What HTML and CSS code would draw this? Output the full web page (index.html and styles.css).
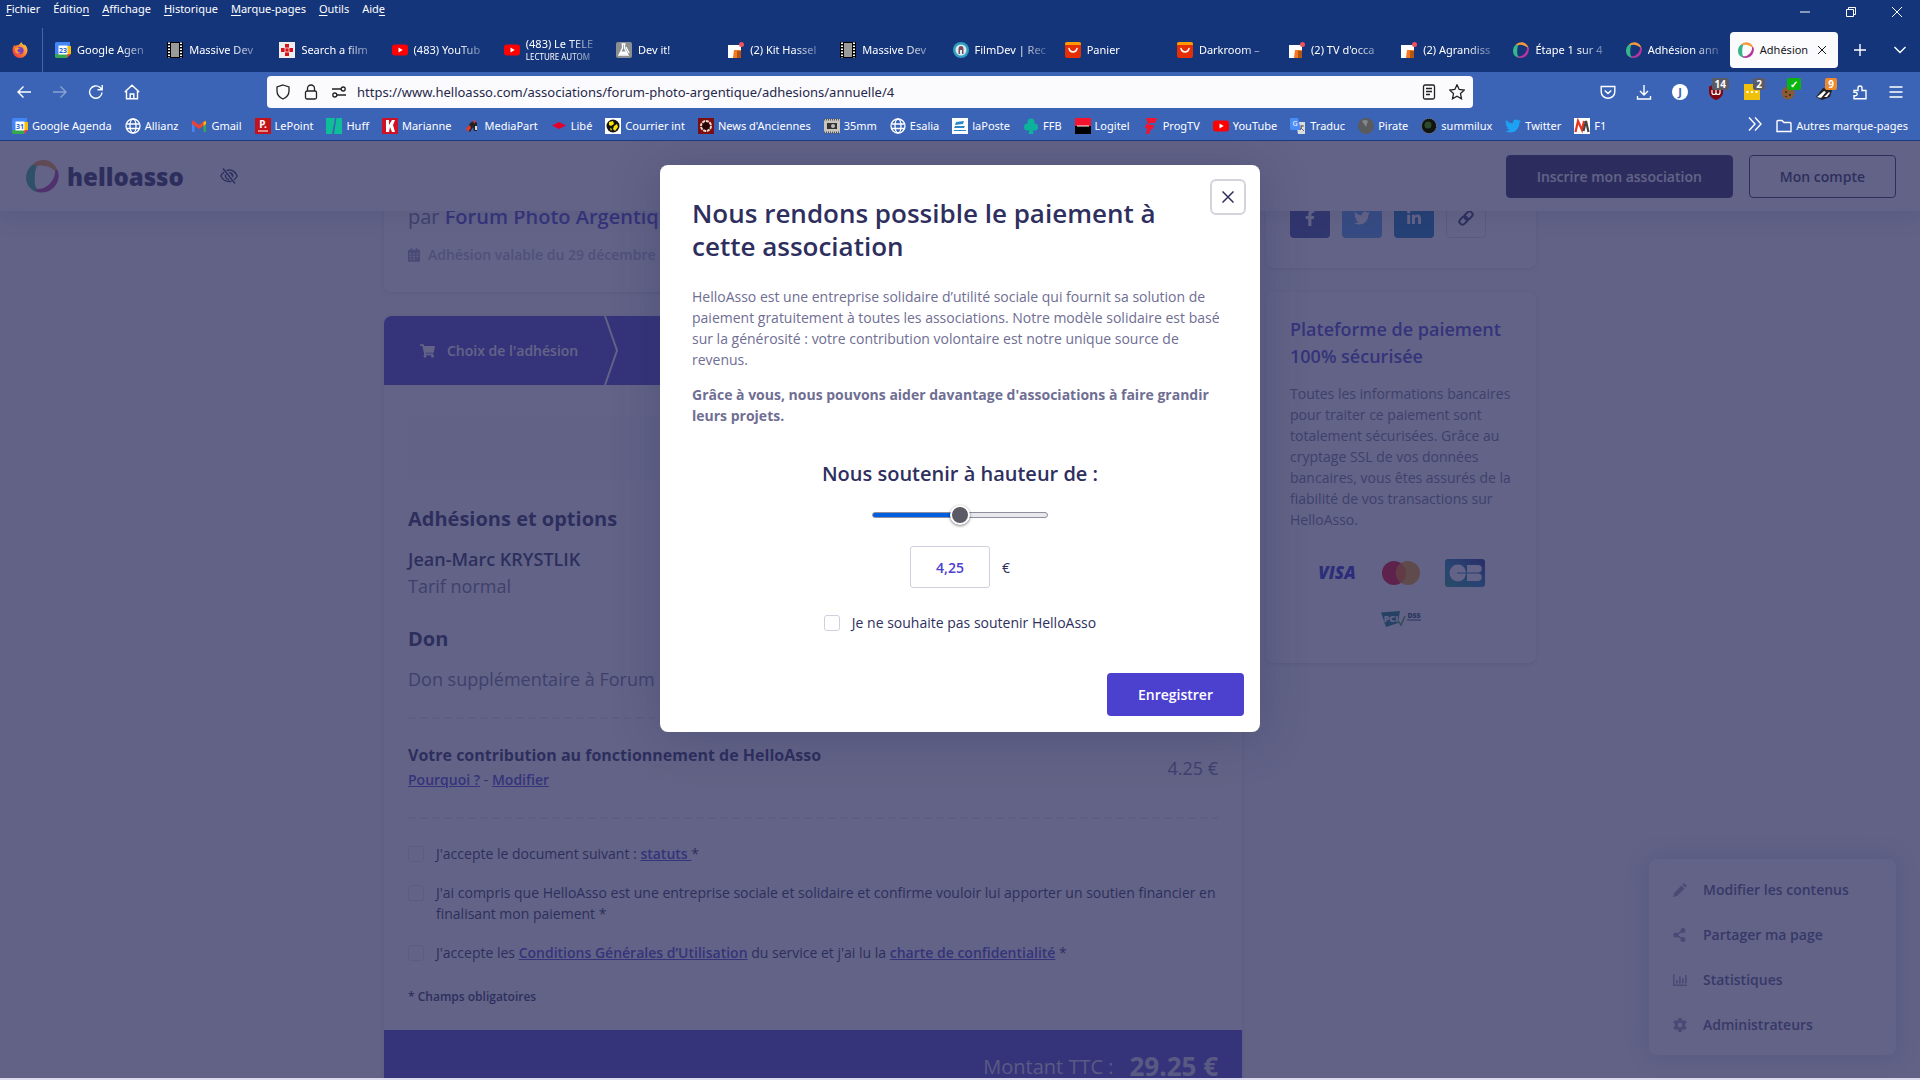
FILE: index.html
```html
<!DOCTYPE html>
<html lang="fr">
<head>
	<meta charset="UTF-8">
	<title>Adhésion annuelle</title>
	<link rel="stylesheet" href="styles.css">
</head>
<body>

<svg class="sprite" aria-hidden="true">
	<defs>
		<linearGradient id="g-fox" x1="1" y1="0" x2="0" y2="1"><stop offset="0" stop-color="#ffe14a"/><stop offset=".5" stop-color="#ff7a2c"/><stop offset="1" stop-color="#e5264f"/></linearGradient>
		<linearGradient id="g-cb" x1="0" y1="1" x2="1" y2="0"><stop offset="0" stop-color="#19a07a"/><stop offset=".5" stop-color="#1a7cb0"/><stop offset="1" stop-color="#202c86"/></linearGradient>
	</defs>
	<symbol id="fox" viewBox="0 0 16 16"><path fill="url(#g-fox)" d="M8 16a7.500 7.500 0 0 1-7.500-7.600c0-2 .6-4 2-5.600l.3 1.500C4 3 5 3.200 6 3.200 7.600 3 8 1 9.500 0c0 1.500 1.500 2 2.600 3.300l.6-.8C14.500 4 15.500 6 15.500 8.500A7.500 7.500 0 0 1 8 16z"/><circle cx="8" cy="8.600" r="3.600" fill="#7b3fc4"/><path fill="#ff9a2e" d="M3 6c2-.8 3.500 0 5 .3-1 1.200-2.600 1-2.600 2.200S7 11 9 10.200c-1 2-5 2-6-1z"/></symbol>
	<symbol id="agenda" viewBox="0 0 16 16"><path fill="#4285f4" d="M1 0h14v12H0V1z"/><path fill="#fbbc04" d="M12 4h4v8h-4z"/><path fill="#34a853" d="M0 12h12v4H1l-1-1z"/><path fill="#ea4335" d="M12 12h4l-4 4z"/><path fill="#fff" d="M3.500 3.500h9v9h-9z"/></symbol>
	<symbol id="film" viewBox="0 0 16 16"><path fill="#000" d="M0 0h16v16H0z"/><path fill="#9a9a9a" d="M4 1h8v14H4z"/><path stroke="#fff" stroke-width="2" stroke-dasharray="1.500 1.500" d="M2 .5V16M14 .5V16"/></symbol>
	<symbol id="cross" viewBox="0 0 16 16"><path fill="#eee" d="M0 0h16v16H0z"/><path fill="#d8121b" d="M6 2h4v4h4v4h-4v4H6v-4H2V6h4z"/><path stroke="#fff" stroke-width=".7" d="M6 6h4v4H6z" fill="none"/></symbol>
	<symbol id="youtube" viewBox="0 0 16 16"><rect y="2.500" width="16" height="11" rx="3" fill="#f00"/><path fill="#fff" d="M6.500 5.600 10.700 8l-4.200 2.400z"/></symbol>
	<symbol id="flask" viewBox="0 0 16 16"><rect width="16" height="16" rx="2" fill="#8b8f92"/><path fill="none" stroke="#fff" stroke-width="1.300" d="M5.500 2h4M6.500 2v4L3 13h9L8.500 6V2M10 5l3 6"/><path fill="#fff" d="M5 9.500h5l1.500 3h-8z"/></symbol>
	<symbol id="forum" viewBox="0 0 16 16"><path fill="#fff" d="M0 3h13v13H0z"/><path fill="#f47a1f" d="M6 8h7l-4 8H5z"/><path fill="#b85410" d="M9 9h4v7H9z"/><circle cx="13.500" cy="2.500" r="2.500" fill="#f0525a"/></symbol>
	<symbol id="filmdev" viewBox="0 0 16 16"><circle cx="8" cy="8" r="8" fill="#2f9ec0"/><circle cx="8" cy="8" r="5.500" fill="#d8eef2"/><path fill="#7a4a5a" d="M5.500 12V7a2.500 3 0 0 1 5 0v5H9V8H7v4z"/></symbol>
	<symbol id="ali" viewBox="0 0 16 16"><rect width="16" height="16" rx="2" fill="#e62e04"/><path fill="#ff9a00" d="M2 0h12a2 2 0 0 1 2 2v1H0V2a2 2 0 0 1 2-2z"/><path fill="none" stroke="#fff" stroke-width="1.500" stroke-linecap="round" d="M4 6.500c1 4.500 7 4.500 8 0"/></symbol>
	<symbol id="ring" viewBox="0 0 34 34"><path fill="#f49a3c" d="M7 5C14-2 26-1 31 8c2 4 2.500 7 2 10-1-5-4-8-9-10S13 5 9 8c-2 2-3 3-3.500 5C4.500 10 5 7 7 5z"/><path fill="#35b58a" d="M6 6c-8 7-8 19 0 25 2 2 6 3 9 3-5-3-6-7-6-12S9 12 11 7C10 6 8 5 6 6z"/><path fill="#b8349c" d="M33 12c3 11-5 22-17 22-3 0-5-1-7-4 5 1 9 0 13-3s8-8 8-15c0-2 2-2 3 0z"/></symbol>
	<symbol id="globe" viewBox="0 0 16 16"><g fill="none" stroke="#fff" stroke-width="1.300"><circle cx="8" cy="8" r="7"/><ellipse cx="8" cy="8" rx="3" ry="7"/><path d="M1.500 6h13M1.500 10.500h13"/></g></symbol>
	<symbol id="gmail" viewBox="0 0 16 16"><path fill="#4285f4" d="M1 3h2.500v11H1z"/><path fill="#34a853" d="M12.500 6H15v8h-2.500z"/><path fill="#ea4335" d="M1 3l1-.6L8 7l6-4.600 1 .6v3L8 11 1 6z"/><path fill="#fbbc04" d="M12.500 4 15 3v3l-2.500 2z"/></symbol>
	<symbol id="bird" viewBox="0 0 512 512"><path d="M459.370 151.716c.325 4.548.325 9.097.325 13.645 0 138.720-105.583 298.558-298.558 298.558-59.452 0-114.680-17.219-161.137-47.106 8.447.974 16.568 1.299 25.340 1.299 49.055 0 94.213-16.568 130.274-44.832-46.132-.975-84.792-31.188-98.112-72.772 6.498.974 12.995 1.624 19.818 1.624 9.421 0 18.843-1.300 27.614-3.573-48.081-9.747-84.143-51.980-84.143-102.985v-1.299c13.969 7.797 30.214 12.670 47.431 13.319-28.264-18.843-46.781-51.005-46.781-87.391 0-19.492 5.197-37.360 14.294-52.954 51.655 63.675 129.300 105.258 216.365 109.807-1.624-7.797-2.599-15.918-2.599-24.040 0-57.828 46.782-104.934 104.934-104.934 30.213 0 57.502 12.670 76.670 33.137 23.715-4.548 46.456-13.320 66.599-25.340-7.798 24.366-24.366 44.833-46.132 57.827 21.117-2.273 41.584-8.122 60.426-16.243-14.292 20.791-32.161 39.308-52.628 54.253z"/></symbol>
</svg>

<header class="browser">
	<div class="menubar">
		<nav class="menus">
			<button><u>F</u>ichier</button>
			<button>Éditio<u>n</u></button>
			<button><u>A</u>ffichage</button>
			<button><u>H</u>istorique</button>
			<button><u>M</u>arque-pages</button>
			<button><u>O</u>utils</button>
			<button>Aid<u>e</u></button>
		</nav>
		<div class="window-buttons">
			<button aria-label="Réduire"><svg viewBox="0 0 12 12"><path d="M1 6h10"/></svg></button>
			<button aria-label="Restaurer"><svg viewBox="0 0 12 12"><path d="M1.500 3.500h7v7h-7zM3.500 3.500v-2h7v7h-2"/></svg></button>
			<button aria-label="Fermer"><svg viewBox="0 0 12 12"><path d="M1 1l10 10M11 1 1 11"/></svg></button>
		</div>
	</div>

	<div class="tabbar">
		<button class="pinned" aria-label="Firefox"><svg><use href="#fox"/></svg></button>
		<div class="tabs">
			<button class="tab"><svg viewBox="0 0 16 16"><use href="#agenda"/><text x="8" y="11" class="day">23</text></svg><span>Google Agen</span></button>
			<button class="tab"><svg><use href="#film"/></svg><span>Massive Dev</span></button>
			<button class="tab"><svg><use href="#cross"/></svg><span>Search a film</span></button>
			<button class="tab"><svg><use href="#youtube"/></svg><span>(483) YouTub</span></button>
			<button class="tab"><svg><use href="#youtube"/></svg><span>(483) Le TELE<small>LECTURE AUTOM</small></span></button>
			<button class="tab"><svg><use href="#flask"/></svg><span>Dev it!</span></button>
			<button class="tab"><svg><use href="#forum"/></svg><span>(2) Kit Hassel</span></button>
			<button class="tab"><svg><use href="#film"/></svg><span>Massive Dev</span></button>
			<button class="tab"><svg><use href="#filmdev"/></svg><span>FilmDev | Rec</span></button>
			<button class="tab"><svg><use href="#ali"/></svg><span>Panier</span></button>
			<button class="tab"><svg><use href="#ali"/></svg><span>Darkroom –</span></button>
			<button class="tab"><svg><use href="#forum"/></svg><span>(2) TV d'occa</span></button>
			<button class="tab"><svg><use href="#forum"/></svg><span>(2) Agrandiss</span></button>
			<button class="tab"><svg><use href="#ring"/></svg><span>Étape 1 sur 4</span></button>
			<button class="tab"><svg><use href="#ring"/></svg><span>Adhésion ann</span></button>
			<button class="tab active"><svg><use href="#ring"/></svg><span>Adhésion</span><svg class="close" viewBox="0 0 12 12"><path d="M2 2l8 8M10 2l-8 8"/></svg></button>
		</div>
		<button class="tab-tool" aria-label="Nouvel onglet"><svg viewBox="0 0 16 16"><path d="M8 2v12M2 8h12"/></svg></button>
		<button class="tab-tool" aria-label="Tous les onglets"><svg viewBox="0 0 16 16"><path d="M2.500 5 8 10.500 13.500 5"/></svg></button>
	</div>

	<div class="toolbar">
		<div class="tools nav-tools">
			<button aria-label="Précédent"><svg viewBox="0 0 16 16"><path d="M15 8H2M7.500 2.500 2 8l5.500 5.500"/></svg></button>
			<button aria-label="Suivant" disabled><svg viewBox="0 0 16 16"><path d="M1 8h13M8.500 2.500 14 8l-5.500 5.500"/></svg></button>
			<button aria-label="Actualiser"><svg viewBox="0 0 16 16"><path d="M14 8.500A6.200 6.200 0 1 1 12 3.500l2 2M14.200 1v4.700H9.500"/></svg></button>
			<button aria-label="Accueil"><svg viewBox="0 0 16 16"><path d="M.8 8 8 1.200 15.200 8M2.500 6.500v8.300h11V6.500M6.200 14.500V10h3.600v4.500"/></svg></button>
		</div>
		<div class="urlbar">
			<svg viewBox="0 0 16 16"><path d="M8 1 14 3v4c0 4-2.500 6.500-6 8-3.500-1.500-6-4-6-8V3z"/></svg>
			<svg viewBox="0 0 16 16"><rect x="2.500" y="7" width="11" height="8" rx="1.500"/><path d="M4.500 7V4.500a3.500 3.500 0 0 1 7 0V7"/></svg>
			<svg viewBox="0 0 16 16"><path d="M1 5h9M6 11h9"/><circle cx="12.200" cy="5" r="2"/><circle cx="3.800" cy="11" r="2"/></svg>
			<input type="text" aria-label="Adresse" value="https://www.helloasso.com/associations/forum-photo-argentique/adhesions/annuelle/4">
			<svg viewBox="0 0 16 16"><rect x="2.500" y="1" width="11" height="14" rx="1.500"/><path d="M5 4.500h6M5 7.500h6M5 10.500h4"/></svg>
			<svg viewBox="0 0 16 16"><path d="M8 .8l2.200 4.700 5 .6-3.700 3.500 1 5.200L8 12.200l-4.500 2.600 1-5.200L.8 6.100l5-.6z"/></svg>
		</div>
		<div class="tools">
			<button aria-label="Pocket"><svg viewBox="0 0 16 16"><path d="M1.200 2.500h13.600V8a6.800 6.200 0 0 1-13.600 0zM4.800 6.500 8 9.500l3.200-3"/></svg></button>
			<button aria-label="Téléchargements"><svg viewBox="0 0 16 16"><path d="M8 1v10M4 7l4 4 4-4M1.500 12v3h13v-3"/></svg></button>
			<button aria-label="Compte"><svg viewBox="0 0 16 16" class="plain"><circle cx="8" cy="8" r="8" fill="#fff"/><text x="8" y="12" class="letter">J</text></svg></button>
			<button aria-label="uBlock"><svg viewBox="0 0 16 16" class="plain"><path fill="#800610" d="M8 0l7 2.500V8c0 4-3 6.500-7 8-4-1.500-7-4-7-8V2.500z"/><path fill="none" stroke="#fff" stroke-width="1.200" d="M4 6v2.500a2 2 0 0 0 4 0V6v2.500a2 2 0 0 0 4 0V6"/></svg><b class="badge">14</b></button>
			<button aria-label="Notes"><svg viewBox="0 0 16 16" class="plain"><path fill="#efc10c" d="M0 0h16v16H0z"/><path fill="#fff" d="M2.500 7h2v2h-2zM7 7h2v2H7zM11.500 7h2v2h-2z"/></svg><b class="badge">2</b></button>
			<button aria-label="Cookies"><svg viewBox="0 0 16 16" class="plain"><circle cx="8" cy="9" r="6.500" fill="#8a5a34"/><path fill="#4f2f18" d="M5 7h2v2H5zM9 10h2v2H9zM5 12h2v1H5z"/></svg><b class="badge green">✓</b></button>
			<button aria-label="Privacy Badger"><svg viewBox="0 0 16 16" class="plain"><path fill="#222" d="M0 13 7 4l9 2-2 7-8 3z"/><path fill="#fff" d="M1 13l7-6 2 1-5 6zM8 13l5-5 1 1-3 4z"/></svg><b class="badge orange">9</b></button>
			<button aria-label="Extensions"><svg viewBox="0 0 16 16"><path d="M2 6.500h4V4a2 2 0 0 1 4 0v2.500h4v8.300H2v-3h1.500a1.700 1.700 0 0 0 0-3.400H2z"/></svg></button>
			<button aria-label="Menu"><svg viewBox="0 0 16 16"><path d="M1.500 3h13M1.500 8h13M1.500 13h13"/></svg></button>
		</div>
	</div>

	<nav class="bookmarks">
		<a href="#"><svg viewBox="0 0 16 16"><use href="#agenda"/><text x="8" y="11" class="day">31</text></svg>Google Agenda</a>
		<a href="#"><svg><use href="#globe"/></svg>Allianz</a>
		<a href="#"><svg><use href="#gmail"/></svg>Gmail</a>
		<a href="#"><svg viewBox="0 0 16 16"><path fill="#c4121a" d="M0 0h16v16H0z"/><text x="8" y="10" class="mark">P.</text><path fill="#fff" d="M3 12.500h10v1H3z"/></svg>LePoint</a>
		<a href="#"><svg viewBox="0 0 16 16"><path fill="#0dbe98" d="M0 0h9L6 16H0zM10.500 0H16v16H8z"/></svg>Huff</a>
		<a href="#"><svg viewBox="0 0 16 16"><path fill="#cf1126" d="M0 0h16v16H0z"/><path fill="#fff" d="M4 2h3v5l3-5h3l-2 5 2 7h-3L8 9l-1 5H4z"/></svg>Marianne</a>
		<a href="#"><svg viewBox="0 0 16 16"><path fill="#222" d="M6 5l4-2 3 2v8h-3l-1-4-3 5-3-2z"/><path fill="#e2382c" d="M2 10l4-3 1 3-3 4zM9 2l3 1-2 3z"/><path fill="#ddd" d="M11 8h2v4h-2z"/></svg>MediaPart</a>
		<a href="#"><svg viewBox="0 0 16 16"><path fill="#e4002b" d="M1 7.500 8 4l7 3.500L8 11z"/></svg>Libé</a>
		<a href="#"><svg viewBox="0 0 16 16"><path fill="#fff" d="M0 0h16v16H0z"/><circle cx="8" cy="8" r="6.500" fill="#111"/><path fill="#ffe300" d="M4 4l4-1 1 3-3 2-2-1zM9 8l3-2 1 3-3 4-2-2zM5 10l2 1-1 2z"/></svg>Courrier int</a>
		<a href="#"><svg viewBox="0 0 16 16"><path fill="#7a0e12" d="M0 0h16v16H0z"/><circle cx="8" cy="8" r="5" fill="#2a0506" stroke="#f0d9c8" stroke-width="2" stroke-dasharray="3 .8"/></svg>News d'Anciennes</a>
		<a href="#"><svg viewBox="0 0 16 16"><path fill="#c9c5bd" d="M0 1h16v14H0z"/><path stroke="#555" stroke-width="2" stroke-dasharray="1 1" d="M0 1.500h16M0 14.500h16"/><path fill="#333" d="M3 5h10v6H3z"/><circle cx="9" cy="8" r="2" fill="#bbb"/></svg>35mm</a>
		<a href="#"><svg><use href="#globe"/></svg>Esalia</a>
		<a href="#"><svg viewBox="0 0 16 16"><path fill="#fff" d="M0 0h16v16H0z"/><path fill="#2b88c8" d="M4 4l8-1-1 3-8 1zM3 8h10l-1 2H2zM2 12h12v1H2z"/></svg>laPoste</a>
		<a href="#"><svg viewBox="0 0 16 16"><g fill="#0cb39a"><circle cx="8" cy="4" r="3.500"/><circle cx="4.500" cy="9" r="3.500"/><circle cx="11.500" cy="9" r="3.500"/><path d="M7 8h2l1.500 8h-5z"/></g></svg>FFB</a>
		<a href="#"><svg viewBox="0 0 16 16"><path fill="#f5142d" d="M0 0h16v8H0z"/><path fill="#000" d="M0 8h16v8H0z"/><path fill="#fff" d="M2 7.500h12v1H2z"/></svg>Logitel</a>
		<a href="#"><svg viewBox="0 0 16 16"><path fill="#f0142c" d="M3 0h11l-2 5H7l-1 2h5l-1 4H8l-2 5H3l1-6H2l1-4h2z"/></svg>ProgTV</a>
		<a href="#"><svg><use href="#youtube"/></svg>YouTube</a>
		<a href="#"><svg viewBox="0 0 16 16"><path fill="#dcdcdc" d="M6 4h9v12H8z"/><path fill="#4b8bf5" d="M0 0h8l3 12H1L0 11z"/><text x="5" y="8" class="tiny">G</text><path stroke="#666" d="M10 8h4M12 7v1l-2 4M11 10l3 3"/></svg>Traduc</a>
		<a href="#"><svg viewBox="0 0 16 16"><circle cx="8" cy="8" r="8" fill="#5a5b5e"/><path fill="#85868a" d="M4 3a5 5 0 0 1 6 0l-2 6z"/></svg>Pirate</a>
		<a href="#"><svg viewBox="0 0 16 16"><circle cx="8" cy="8" r="7.500" fill="#101510" stroke="#888" stroke-dasharray="1 1"/><circle cx="7" cy="7" r="3.500" fill="#2e4a2c"/></svg>summilux</a>
		<a href="#"><svg class="bird"><use href="#bird"/></svg>Twitter</a>
		<a href="#"><svg viewBox="0 0 16 16"><path fill="#fff" d="M0 0h16v16H0z"/><path fill="none" stroke="#e8321e" stroke-width="2.200" d="M1.500 14 4 3l4 9 2-9"/><path fill="none" stroke="#444" stroke-width="2.200" d="M9.500 13 12 3l2.500 11"/></svg>F1</a>
		<button class="more" aria-label="Autres"><svg viewBox="0 0 16 16"><path d="M2 1.500 8 8l-6 6.500M8 1.500 14 8l-6 6.500"/></svg></button>
		<a href="#"><svg viewBox="0 0 16 16" class="line"><path d="M1 13.500V3.500a1 1 0 0 1 1-1h4l2 2h6a1 1 0 0 1 1 1v8z"/></svg>Autres marque-pages</a>
	</nav>
</header>

<div class="viewport">

	<header class="site-header">
		<a class="logo" href="#"><svg><use href="#ring"/></svg>helloasso</a>
		<button class="contrast" aria-label="Contraste"><svg viewBox="0 0 18 16"><path d="M6.500 2.600C11 1 15 3.500 17.200 8c-.8 1.600-1.800 2.800-3 3.700M11.500 13.300C6.500 14.300 3 12 .8 8c.8-1.500 1.900-2.900 3.300-3.900M5.600 6.500c-.6 2.600.9 4.800 3.500 5M9 4.600c2.200 0 3.600 1.600 3.600 3.600M3 .5l12 15"/><path class="iris" d="M10 4.500c3 .5 4 3 3 5.500z"/></svg></button>
		<button class="btn dark">Inscrire mon association</button>
		<button class="btn outline">Mon compte</button>
	</header>

	<div class="page">
		<main>
			<section class="card intro">
				<p class="by">par <a href="#">Forum Photo Argentique</a></p>
				<p class="date"><svg viewBox="0 0 14 16"><path d="M3 0h2v2h4V0h2v2h2a1 1 0 0 1 1 1v12a1 1 0 0 1-1 1H1a1 1 0 0 1-1-1V3a1 1 0 0 1 1-1h2zM2 6v1.500h2V6zm4 0v1.500h2V6zm4 0v1.500h2V6zM2 9v1.500h2V9zm4 0v1.500h2V9zm4 0v1.500h2V9zM2 12v1.500h2V12zm4 0v1.500h2V12z" fill-rule="evenodd"/></svg>Adhésion valable du 29 décembre 2022</p>
			</section>

			<section class="card order">
				<div class="steps">
					<div class="step"><svg viewBox="0 0 576 512"><path d="M528.120 301.319l47.273-208C578.806 78.301 567.391 64 551.990 64H159.208l-9.166-44.810C147.758 8.021 137.930 0 126.529 0H24C10.745 0 0 10.745 0 24v16c0 13.255 10.745 24 24 24h69.883l70.248 343.435C147.325 417.100 136 435.222 136 456c0 30.928 25.072 56 56 56s56-25.072 56-56c0-15.674-6.447-29.835-16.824-40h209.647C430.447 426.165 424 440.326 424 456c0 30.928 25.072 56 56 56s56-25.072 56-56c0-22.172-12.888-41.332-31.579-50.405l5.517-24.276c3.413-15.018-8.002-29.319-23.403-29.319H218.117l-6.545-32h293.145c11.206 0 20.920-7.754 23.403-18.681z"/></svg>Choix de l'adhésion</div>
					<svg class="chevron" viewBox="0 0 14 69" preserveAspectRatio="none"><path d="M1 0l12 34.500L1 69"/></svg>
				</div>
				<div class="content">
					<div class="notice"></div>
					<h2>Adhésions et options</h2>
					<p class="item"><strong>Jean-Marc KRYSTLIK</strong><br>Tarif normal</p>
					<h2>Don</h2>
					<p class="item">Don supplémentaire à Forum Photo Argentique</p>
					<div class="contribution">
						<div>
							<h3>Votre contribution au fonctionnement de HelloAsso</h3>
							<p><a href="#">Pourquoi ?</a> - <a href="#">Modifier</a></p>
						</div>
						<span class="amount">4.25 €</span>
					</div>
					<div class="terms">
						<label><input type="checkbox"><span>J'accepte le document suivant : <a href="#">statuts </a>*</span></label>
						<label><input type="checkbox"><span>J'ai compris que HelloAsso est une entreprise sociale et solidaire et confirme vouloir lui apporter un soutien financier en finalisant mon paiement *</span></label>
						<label><input type="checkbox"><span>J'accepte les <a href="#">Conditions Générales d’Utilisation</a> du service et j'ai lu la <a href="#">charte de confidentialité</a> *</span></label>
					</div>
					<p class="required">* Champs obligatoires</p>
				</div>
				<div class="total">Montant TTC : <strong>29.25 €</strong></div>
			</section>
		</main>

		<aside>
			<section class="card share">
				<a class="facebook" href="#" aria-label="Facebook"><svg viewBox="0 0 320 512"><path d="M279.140 288l14.220-92.660h-88.910v-60.130c0-25.350 12.420-50.060 52.240-50.060h40.420V6.260S260.430 0 225.360 0c-73.220 0-121.080 44.380-121.080 124.720v70.620H22.890V288h81.390v224h100.170V288z"/></svg></a>
				<a class="twitter" href="#" aria-label="Twitter"><svg><use href="#bird"/></svg></a>
				<a class="linkedin" href="#" aria-label="LinkedIn"><svg viewBox="0 0 448 512"><path d="M100.280 448H7.400V148.900h92.880zM53.790 108.100C24.090 108.100 0 83.500 0 53.800a53.790 53.790 0 0 1 107.580 0c0 29.700-24.100 54.300-53.790 54.300zM447.900 448h-92.680V302.400c0-34.700-.7-79.200-48.290-79.200-48.290 0-55.690 37.700-55.690 76.700V448h-92.780V148.900h89.080v40.800h1.300c12.400-23.500 42.690-48.300 87.880-48.300 94 0 111.280 61.900 111.280 142.300V448z"/></svg></a>
				<a class="copy" href="#" aria-label="Copier le lien"><svg viewBox="0 0 16 16"><g transform="rotate(-45 8 8)"><rect x="0" y="5" width="9" height="6" rx="3"/><rect x="7" y="5" width="9" height="6" rx="3"/></g></svg></a>
			</section>

			<section class="card secure">
				<h4>Plateforme de paiement 100% sécurisée</h4>
				<p>Toutes les informations bancaires pour traiter ce paiement sont totalement sécurisées. Grâce au cryptage SSL de vos données bancaires, vous êtes assurés de la fiabilité de vos transactions sur HelloAsso.</p>
				<div class="logos">
					<svg viewBox="0 0 40 28"><text x="20" y="20" class="visa">VISA</text></svg>
					<svg viewBox="0 0 40 28"><circle cx="13" cy="14" r="12" fill="#eb001b"/><circle cx="27" cy="14" r="12" fill="#f79e1b"/><path fill="#ff5f00" d="M20 4.300a12 12 0 0 1 0 19.400 12 12 0 0 1 0-19.400z"/></svg>
					<svg viewBox="0 0 40 28"><rect width="40" height="28" rx="3" fill="url(#g-cb)"/><g fill="#fff"><path d="M13 5.500c4 0 7.500 3 7.900 8H12v1h8.900c-.4 5-3.900 8-7.900 8a8.500 8.500 0 0 1 0-17z"/><path d="M22 6h11a3.700 3.700 0 0 1 0 7.500H22zM22 14.500h11a3.700 3.700 0 0 1 0 7.500H22z"/></g></svg>
					<svg viewBox="0 0 40 16"><path fill="#157a7a" d="M0 1.500 19 0l-2 12-12 4z"/><text x="10" y="11" class="pci">PCI</text><path fill="none" stroke="#3aa34a" stroke-width="1.500" d="M17 10l3 4 4-9"/><text x="33" y="7" class="dss">DSS</text><path stroke="#1c4a6a" d="M26 9h14"/></svg>
				</div>
			</section>
		</aside>
	</div>

	<nav class="admin">
		<a href="#"><svg viewBox="0 0 14 14"><path d="M0 14l1-4L8.500 2.500l3 3L4 13zM9.500 1.500 11 0l3 3-1.500 1.500z"/></svg>Modifier les contenus</a>
		<a href="#"><svg viewBox="0 0 14 14"><circle cx="2.800" cy="7" r="2.500"/><circle cx="10" cy="2.600" r="2.500"/><circle cx="10" cy="11.400" r="2.500"/><path d="M2.500 6.300 10 2l.8 1.300-6.300 3.700 6.300 3.700L10 12 2.500 7.700z"/></svg>Partager ma page</a>
		<a href="#"><svg viewBox="0 0 14 14"><path d="M0 1h1.500v10.500H14V13H0zM3 7h1.700v3.500H3zM6 3.500h1.700v7H6zM9 5.500h1.700v5H9zM12 2h1.700v8.500H12z"/></svg>Statistiques</a>
		<a href="#"><svg viewBox="0 0 14 14"><path fill-rule="evenodd" d="M5.500 0h3l.4 2 1.300.8 2-.8L13.700 4.600 12.200 6v2l1.500 1.400-1.500 2.600-2-.8-1.300.8-.4 2h-3l-.4-2-1.300-.8-2 .8L.3 9.400 1.800 8V6L.3 4.600 1.800 2l2 .8L5.100 2zM7 4.700a2.300 2.300 0 1 0 0 4.600 2.300 2.300 0 0 0 0-4.600z"/></svg>Administrateurs</a>
	</nav>

	<div class="overlay">
		<form class="modal">
			<button type="button" class="close-modal" aria-label="Fermer"><svg viewBox="0 0 12 12"><path d="M.5.500l11 11M11.500.500l-11 11"/></svg></button>
			<h1>Nous rendons possible le paiement à cette association</h1>
			<p>HelloAsso est une entreprise solidaire d’utilité sociale qui fournit sa solution de paiement gratuitement à toutes les associations. Notre modèle solidaire est basé sur la générosité : votre contribution volontaire est notre unique source de revenus.</p>
			<p><strong>Grâce à vous, nous pouvons aider davantage d'associations à faire grandir leurs projets.</strong></p>
			<label class="support" for="slider">Nous soutenir à hauteur de :</label>
			<input type="range" id="slider" min="0" max="8.5" step="0.25" value="4.25">
			<div class="value"><input type="text" aria-label="Montant" value="4,25"><span>€</span></div>
			<label class="none"><input type="checkbox"><span>Je ne souhaite pas soutenir HelloAsso</span></label>
			<button type="button" class="save">Enregistrer</button>
		</form>
	</div>
</div>

</body>
</html>
```
FILE: styles.css
```css
* {
	box-sizing: border-box;
}
body {
	display: flex;
	flex-direction: column;
	height: 100vh;
	margin: 0;
	overflow: hidden;
	background: #dddcee;
	color: #2e2f5e;
	font-family: 'Open Sans', sans-serif;
	font-size: 14px;
	line-height: 21px;
}
h1, h2, h3, h4, p {
	margin: 0;
}
button,
input {
	font: inherit;
	color: inherit;
}
button {
	padding: 0;
	border: 0;
	background: none;
}
svg {
	flex: none;
}
.sprite {
	position: absolute;
	width: 0;
	height: 0;
}

/* browser */
.browser {
	flex: none;
	color: #fff;
	font-family: 'Noto Sans', sans-serif;
	font-size: 12px;
	line-height: 16px;
	background: #15357a;
	border-bottom: 1px solid #1b3b80;
}
.browser svg {
	width: 16px;
	height: 16px;
}
.menubar {
	display: flex;
	justify-content: space-between;
	height: 28px;
}
.menus {
	display: flex;
	align-items: flex-start;
	gap: 13px;
	padding: 1px 6px;
	font-size: 11px;
}
.menus u {
	text-underline-offset: 2px;
}
.window-buttons {
	display: flex;
	gap: 34px;
	padding: 0 17px;
}
.window-buttons svg {
	width: 12px;
	height: 12px;
	fill: none;
	stroke: #fff;
}
.tabbar {
	display: flex;
	height: 44px;
}
.pinned {
	flex: none;
	width: 43px;
	padding-right: 3px;
	border-right: 1px solid #4a66a0;
}
.browser .pinned svg,
.tab-tool svg,
.tools svg {
	display: block;
	margin: 0 auto;
}
.tabs {
	display: flex;
	flex: 1;
	min-width: 0;
	padding: 4px 0 4px 2px;
}
.tab {
	display: flex;
	flex: 1 1 0;
	align-items: center;
	gap: 6px;
	min-width: 0;
	margin: 0 2px;
	padding: 0 6px 0 8px;
	text-align: left;
	font-size: 11px;
	line-height: 14px;
}
.tab span {
	flex: 1;
	white-space: nowrap;
	-webkit-mask-image: linear-gradient(to right, #000 60%, rgba(0, 0, 0, .2));
	mask-image: linear-gradient(to right, #000 60%, rgba(0, 0, 0, .2));
}
.tab small {
	display: block;
	font-size: 8px;
	line-height: 12px;
}
.tab.active {
	border-radius: 4px;
	background: #fbfbfe;
	color: #15141a;
}
.tab.active span {
	-webkit-mask-image: none;
	mask-image: none;
}
.browser .tab .close {
	width: 12px;
	height: 12px;
	margin-right: 4px;
	stroke: #15141a;
}
.day {
	fill: #1a66d6;
	font-size: 7px;
	font-weight: bold;
	text-anchor: middle;
}
.mark {
	fill: #fff;
	font-size: 10px;
	font-weight: bold;
	text-anchor: middle;
}
.tiny {
	fill: #fff;
	font-size: 7px;
	text-anchor: middle;
}
.letter {
	fill: #3a63b5;
	font-size: 11px;
	font-weight: bold;
	text-anchor: middle;
}
.tab-tool {
	flex: none;
	width: 40px;
}
.tab-tool svg,
.tools svg,
.more svg,
.line {
	fill: none;
	stroke: #fff;
	stroke-width: 1.4;
}
.tools svg.plain {
	stroke: none;
}
.toolbar {
	display: flex;
	align-items: center;
	justify-content: space-between;
	height: 40px;
	padding: 0 6px;
	background: #3c64b6;
}
.tools {
	display: flex;
}
.tools button {
	position: relative;
	width: 36px;
	height: 32px;
}
.tools button:disabled {
	opacity: .4;
}
.nav-tools {
	width: 261px;
}
.badge {
	position: absolute;
	top: 2px;
	right: 5px;
	padding: 0 3px;
	border-radius: 2px;
	background: #5b5b66;
	color: #fff;
	font-size: 10px;
	line-height: 12px;
}
.badge.green {
	background: #0bb50f;
}
.badge.orange {
	background: #ee8a2c;
}
.urlbar {
	display: flex;
	flex: 1;
	align-items: center;
	gap: 12px;
	height: 32px;
	margin-right: 117px;
	padding: 0 8px;
	border-radius: 4px;
	background: #fbfbfe;
}
.urlbar svg {
	fill: none;
	stroke: #222;
	stroke-width: 1.3;
}
.urlbar input {
	flex: 1;
	margin-left: -2px;
	padding: 0;
	border: 0;
	outline: 0;
	background: none;
	color: #26284a;
	font-size: 13px;
}
.bookmarks {
	display: flex;
	align-items: center;
	gap: 13px;
	height: 28px;
	padding: 0 12px;
	background: #3c64b6;
	white-space: nowrap;
	font-size: 11px;
}
.bookmarks a {
	display: flex;
	align-items: center;
	gap: 4px;
	color: #fff;
	text-decoration: none;
}
.bookmarks .bird {
	fill: #1da1f2;
}
.more {
	margin-left: auto;
}

/* page */
.viewport {
	position: relative;
	flex: 1;
	margin-bottom: 2px;
	overflow: hidden;
	background: #f9f9fd;
}
.site-header {
	position: absolute;
	top: 0;
	left: 0;
	right: 0;
	z-index: 1;
	display: flex;
	align-items: center;
	gap: 16px;
	height: 70px;
	padding: 0 24px 0 26px;
	background: #fff;
	box-shadow: 0 4px 24px rgba(46, 47, 94, .15);
}
.logo {
	display: flex;
	align-items: center;
	gap: 8px;
	color: #2e2f5e;
	font-size: 24px;
	font-weight: 800;
	text-decoration: none;
}
.logo svg {
	width: 33px;
	height: 34px;
}
.contrast {
	margin: 0 auto 0 20px;
}
.contrast svg {
	display: block;
	width: 18px;
	height: 16px;
	fill: none;
	stroke: #2e2f5e;
	stroke-width: 1.4;
}
.contrast .iris {
	fill: #2e2f5e;
	stroke: none;
}
.btn {
	height: 43px;
	padding: 0 30px;
	border: 1px solid #2e2f5e;
	border-radius: 4px;
	font-weight: 600;
}
.dark {
	background: #2e2764;
	color: #fff;
}
.page {
	display: flex;
	align-items: flex-start;
	gap: 24px;
	max-width: 1152px;
	margin: 0 auto;
}
main {
	flex: 1;
}
aside {
	width: 270px;
}
.card {
	margin-bottom: 24px;
	border-radius: 8px;
	background: #fff;
	box-shadow: 0 1px 4px rgba(46, 47, 94, .15);
}
.card a {
	color: #4c40cf;
	font-weight: 600;
}
.intro {
	padding: 61px 24px 27px;
}
.by {
	color: #73739a;
	font-size: 20px;
	line-height: 30px;
}
.by a {
	text-decoration: none;
}
.date {
	display: flex;
	align-items: center;
	gap: 8px;
	margin-top: 12px;
	color: #b4b4d0;
	font-weight: 600;
}
.date svg {
	width: 12px;
	height: 14px;
	fill: #9b9bbd;
}
.order {
	overflow: hidden;
}
.steps {
	display: flex;
	height: 69px;
	background: #4c40cf;
	color: #fff;
}
.step {
	display: flex;
	align-items: center;
	gap: 12px;
	width: 220px;
	padding-left: 36px;
	font-weight: 600;
}
.step svg {
	width: 15px;
	height: 14px;
	fill: #fff;
}
.chevron {
	width: 14px;
	height: 69px;
	fill: none;
	stroke: #fff;
	stroke-width: 2;
}
.content {
	padding: 31px 24px 24px;
}
.notice {
	height: 64px;
	border-radius: 4px;
	background: #f9f9fd;
}
h2 {
	margin: 24px 0 12px;
	font-size: 20px;
	line-height: 30px;
}
.item {
	color: #73739a;
	font-size: 18px;
	line-height: 27px;
}
.item strong {
	color: #2e2f5e;
	font-weight: 600;
}
.contribution {
	display: flex;
	align-items: center;
	justify-content: space-between;
	margin: 24px 0;
	padding: 26px 0;
	background:
		repeating-linear-gradient(to right, #ebebf5 0 7px, transparent 7px 12px) top / 100% 2px no-repeat,
		repeating-linear-gradient(to right, #ebebf5 0 7px, transparent 7px 12px) bottom / 100% 2px no-repeat;
}
h3 {
	font-size: 16px;
	line-height: 24px;
}
.contribution p {
	line-height: 26px;
}
.amount {
	color: #73739a;
	font-size: 18px;
}
.terms {
	display: flex;
	flex-direction: column;
	gap: 18px;
}
.terms label,
.none {
	display: flex;
	gap: 12px;
}
input[type=checkbox] {
	flex: none;
	width: 16px;
	height: 16px;
	margin: 3px 0 0;
	border: 1px solid #cfcfdd;
	border-radius: 3px;
	background: #fff;
	appearance: none;
}
.terms input[type=checkbox] {
	border-color: #e2e2ee;
}
.required {
	margin-top: 25px;
	font-size: 12px;
	line-height: 18px;
	font-weight: 600;
}
.total {
	display: flex;
	align-items: center;
	justify-content: flex-end;
	gap: 16px;
	height: 73px;
	padding: 0 24px;
	background: #4c40cf;
	color: #dcdcf2;
	font-size: 20px;
}
.total strong {
	font-size: 26px;
}
.share {
	display: flex;
	gap: 12px;
	padding: 57px 24px 30px;
}
.share a {
	display: flex;
	align-items: center;
	justify-content: center;
	width: 40px;
	height: 40px;
	border-radius: 4px;
}
.share svg {
	width: 16px;
	height: 16px;
	fill: #fff;
}
.facebook {
	background: #3b4d9f;
}
.twitter {
	background: #4f9ff0;
}
.linkedin {
	background: #0a75b8;
}
.copy {
	border: 1px solid #dcdcec;
}
.copy svg {
	fill: none;
	stroke: #2e2f5e;
	stroke-width: 2;
}
.secure {
	padding: 24px 24px 36px;
}
h4 {
	margin-bottom: 13px;
	color: #4c40cf;
	font-size: 18px;
	line-height: 27px;
	font-weight: 600;
}
.secure p {
	color: #73739a;
}
.logos {
	display: flex;
	flex-wrap: wrap;
	justify-content: center;
	gap: 24px;
	margin-top: 29px;
}
.logos svg {
	width: 40px;
}
.visa {
	fill: #2a2ad0;
	font-size: 17px;
	font-weight: 800;
	font-style: italic;
	text-anchor: middle;
}
.pci {
	fill: #fff;
	font-size: 9px;
	font-weight: 800;
	text-anchor: middle;
}
.dss {
	fill: #1c4a6a;
	font-size: 7px;
	font-weight: 800;
	text-anchor: middle;
}
.admin {
	position: absolute;
	right: 24px;
	bottom: 23px;
	width: 247px;
	padding: 8px 24px;
	border-radius: 8px;
	background: #fff;
	box-shadow: 0 0 24px rgba(46, 47, 94, .2);
}
.admin a {
	display: flex;
	align-items: center;
	gap: 16px;
	padding: 12px 0;
	color: #55558a;
	font-weight: 600;
	text-decoration: none;
}
.admin svg {
	width: 14px;
	height: 14px;
	fill: #9b9bbd;
}

/* modal */
.overlay {
	position: absolute;
	top: 0;
	right: 0;
	bottom: 0;
	left: 0;
	z-index: 2;
	padding-top: 24px;
	background: rgba(46, 47, 94, .75);
}
.modal {
	position: relative;
	display: flex;
	flex-direction: column;
	align-items: center;
	max-width: 600px;
	margin: 0 auto;
	padding: 32px 16px 16px;
	border-radius: 8px;
	background: #fff;
	box-shadow: 0 4px 48px rgba(46, 47, 94, .3);
}
.close-modal {
	position: absolute;
	top: 14px;
	right: 14px;
	width: 36px;
	height: 36px;
	border: 2px solid #d3d3dc;
	border-radius: 6px;
}
.close-modal svg {
	display: block;
	width: 12px;
	height: 12px;
	margin: 0 auto;
	fill: none;
	stroke: #2e2f5e;
	stroke-width: 1.5;
}
h1 {
	width: 100%;
	margin-bottom: 23px;
	padding: 0 64px 0 16px;
	font-size: 26px;
	line-height: 33px;
	font-weight: 600;
}
.modal p {
	width: 100%;
	margin-bottom: 14px;
	padding: 0 16px;
	color: #6f6e93;
}
.support {
	margin: 19px 0 17px;
	font-size: 20px;
	line-height: 30px;
	font-weight: 600;
}
input[type=range] {
	width: 176px;
	height: 18px;
	margin: 0;
	background: none;
	appearance: none;
}
input[type=range]::-webkit-slider-runnable-track {
	height: 6px;
	border: 1px solid #8f8f9d;
	border-radius: 3px;
	background: linear-gradient(to right, #0060df 50%, #e9e9ed 50%);
}
input[type=range]::-webkit-slider-thumb {
	width: 20px;
	height: 20px;
	margin-top: -8px;
	border: 2px solid #fff;
	border-radius: 50%;
	background: #5b5b66;
	box-shadow: 0 1px 3px rgba(0, 0, 0, .5);
	appearance: none;
}
.value {
	display: flex;
	align-items: center;
	gap: 12px;
	margin: 22px 0 24px;
	padding-left: 50px;
}
.value input {
	width: 80px;
	height: 42px;
	padding: 0;
	border: 1px solid #cfcfdd;
	border-radius: 3px;
	color: #4c40cf;
	font-weight: 600;
	text-align: center;
}
.value span {
	width: 58px;
}
.save {
	align-self: flex-end;
	width: 137px;
	height: 43px;
	margin-top: 40px;
	border-radius: 4px;
	background: #4c40cf;
	color: #fff;
	font-weight: 600;
}
```
